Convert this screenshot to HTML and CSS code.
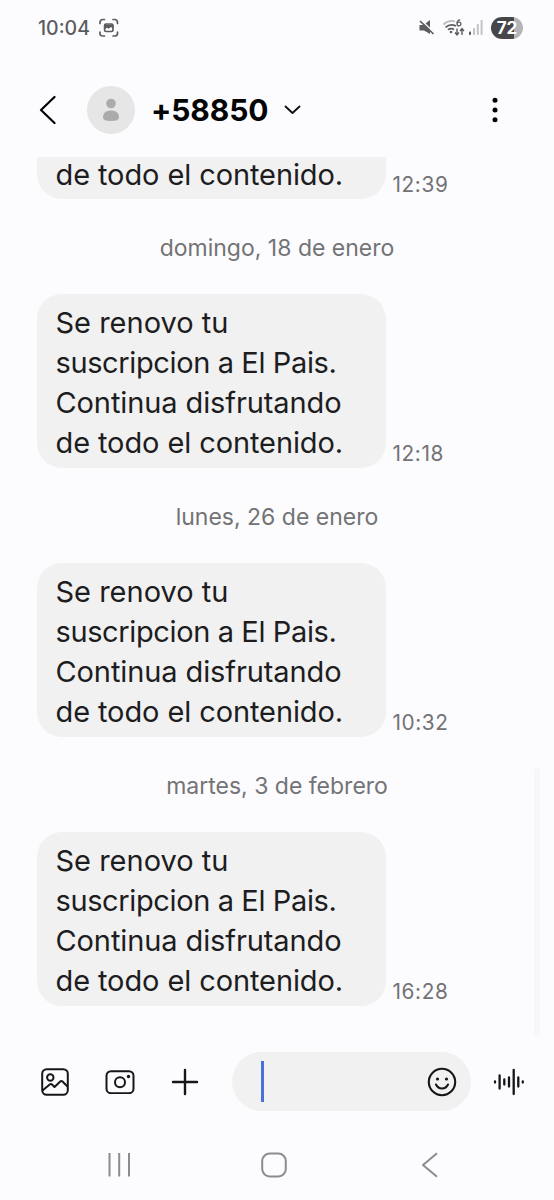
FILE: index.html
```html
<!DOCTYPE html>
<html lang="es">
<head>
<meta charset="utf-8">
<title>+58850</title>
<link rel="stylesheet" href="styles.css">
</head>
<body>
<div class="phone">
  <div class="status">
    <span class="clock">10:04</span>
    <svg class="shot" width="20" height="20" viewBox="0 0 20 20" fill="none" stroke="#5c5c5f" stroke-width="1.7" stroke-linecap="round"><path d="M1 5.500V4.500Q1 1.500 4 1.500H5.500M14 1.500h1.500Q18.500 1.500 18.500 4.500V5.500M18.500 14v1.500Q18.500 18 15.500 18H14M5.500 18H4Q1 18 1 15.500V14"/><rect x="5.600" y="6" width="8.400" height="7.500" rx="1.500"/><path d="M5.500 6.500h8.500v4l-2-1.500-2.500 1.800-1.500-1-2.500 1.500z" fill="#5c5c5f" stroke="none"/></svg>
    <div class="indicators">
      <svg width="16" height="16" viewBox="0 0 16 16"><path d="M.5 5h4L11 0v14L5 10.500H.500z" fill="#5c5c5f"/><path d="M1.500-.5 16 13.500" stroke="#fcfcfe" stroke-width="1.500"/><path d="M1 1l13.500 13" stroke="#5c5c5f" stroke-width="1.700"/></svg>
      <svg class="wifi" width="22" height="18" viewBox="0 0 22 18" fill="none" stroke="#5c5c5f" stroke-width="1.700"><path d="M.5 5.500Q6 .5 12 2.500" stroke="#bbb"/><path d="M2.500 8.300Q7.500 4 13 7M5 10.800Q8 8.700 11 10.500"/><circle cx="8" cy="13" r="1.300" fill="#5c5c5f" stroke="none"/><path d="M14 9.500v6.500M12 13.500l2 2.500 2-2.500M19 16V9.500M17 12l2-2.500 2 2.500" stroke-width="1.400"/><path d="M17.300.8Q14 1 14 4.500" stroke-width="1.300"/><circle cx="16" cy="5" r="1.900" stroke-width="1.300"/></svg>
      <svg class="signal" width="14" height="16" viewBox="0 0 14 16" fill="#c3c3c5"><rect y="11.500" width="2" height="3.500" rx=".7" fill="#5c5c5f"/><rect x="4" y="8" width="2" height="7" rx=".7"/><rect x="7.800" y="4" width="2" height="11" rx=".7"/><rect x="11.600" y="0" width="2" height="15" rx=".7"/></svg>
      <span class="battery">72</span>
    </div>
  </div>
  <header class="header">
    <svg class="back" width="17" height="30" viewBox="0 0 17 30" fill="none" stroke="#000" stroke-width="2.200" stroke-linecap="round" stroke-linejoin="round"><path d="M15.500 2 2 15 15.500 28"/></svg>
    <svg class="avatar" width="48" height="48" viewBox="0 0 48 48"><circle cx="24" cy="24" r="24" fill="#e6e6e6"/><g fill="#ababab"><circle cx="24" cy="17.500" r="4.800"/><path d="M16 31.500C16 27 19 24.500 24 24.500S32 27 32 31.500Q32 35 24 35T16 31.500z"/></g></svg>
    <h1 class="name">+58850</h1>
    <svg class="chevron" width="17" height="10" viewBox="0 0 17 10" fill="none" stroke="#111" stroke-width="1.900" stroke-linecap="round" stroke-linejoin="round"><path d="M1.500 1.500 8.500 8l7-6.500"/></svg>
    <svg class="more" width="6" height="26" viewBox="0 0 6 26"><circle cx="3" cy="3.300" r="2.500"/><circle cx="3" cy="13" r="2.500"/><circle cx="3" cy="22.700" r="2.500"/></svg>
  </header>
  <main class="thread">
    <div class="message partial"><p class="bubble"><span>de todo el contenido.</span></p><time>12:39</time></div>
    <div class="date">domingo, 18 de enero</div>
    <div class="message"><p class="bubble"><span class="first">Se renovo tu</span><span class="tight">suscripcion a El Pais.</span><span>Continua disfrutando</span><span>de todo el contenido.</span></p><time>12:18</time></div>
    <div class="date">lunes, 26 de enero</div>
    <div class="message"><p class="bubble"><span class="first">Se renovo tu</span><span class="tight">suscripcion a El Pais.</span><span>Continua disfrutando</span><span>de todo el contenido.</span></p><time>10:32</time></div>
    <div class="date">martes, 3 de febrero</div>
    <div class="message"><p class="bubble"><span class="first">Se renovo tu</span><span class="tight">suscripcion a El Pais.</span><span>Continua disfrutando</span><span>de todo el contenido.</span></p><time>16:28</time></div>
    <div class="scrollbar"></div>
  </main>
  <div class="composer">
    <svg class="gallery" width="28" height="28" viewBox="0 0 28 28" fill="none" stroke="#161618" stroke-width="2" stroke-linejoin="round"><rect x="1.200" y="1.200" width="25.600" height="25.600" rx="4.500"/><circle cx="9.300" cy="9.500" r="3.200"/><path d="M1.500 22.500 9 16.200Q10 15.500 11 16.500L13.500 19 19.500 13.300Q20.500 12.500 21.500 13.500L26.500 18.500"/></svg>
    <svg class="camera" width="30" height="24" viewBox="0 0 30 24" fill="none" stroke="#161618" stroke-width="2"><rect x="1.500" y="1.200" width="27" height="22" rx="4.500"/><circle cx="15" cy="12.200" r="5"/><circle cx="23.500" cy="6.500" r="1.700" fill="#161618" stroke="none"/></svg>
    <svg class="plus" width="28" height="28" viewBox="0 0 28 28" stroke="#161618" stroke-width="2.400" stroke-linecap="round"><path d="M14 2v24M2 14h24"/></svg>
    <div class="field"><i class="caret"></i>
      <svg width="30" height="30" viewBox="0 0 30 30" fill="none" stroke="#161618" stroke-width="2.100" stroke-linecap="round"><circle cx="15" cy="15" r="13.200"/><path d="M9 17.500Q11 21.500 15 21.500T21 17.500"/><g fill="#161618" stroke="none"><circle cx="10.500" cy="12" r="1.600"/><circle cx="19.500" cy="12" r="1.600"/></g></svg>
    </div>
    <svg class="voice" width="32" height="28" viewBox="0 0 32 28" stroke="#161618" stroke-width="2.300" stroke-linecap="round"><path d="M2 13.500v1M6.600 7.500v13M11.300 11.500v5M16 9.500v9M20.700 2v24M25.300 9.500v9M29.800 13.500v1"/></svg>
  </div>
  <nav class="nav">
    <svg width="24" height="24" viewBox="0 0 24 24" stroke="#8c8c8e" stroke-width="2"><path d="M2.500 0v23.500M12.200 0v23.500M22 0v23.500"/></svg>
    <svg class="home" width="26" height="26" viewBox="0 0 26 26" fill="none" stroke="#8c8c8e" stroke-width="2"><rect x="1.200" y="1.500" width="23.600" height="23" rx="7.500"/></svg>
    <svg class="return" width="18" height="26" viewBox="0 0 18 26" fill="none" stroke="#8c8c8e" stroke-width="2" stroke-linejoin="round"><path d="M16 1.200 2 13l14 11.800"/></svg>
  </nav>
</div>
</body>
</html>
```
FILE: styles.css
```css
* { box-sizing: border-box; }
body { margin: 0; background: #fcfcfe; font-family: Inter, Roboto, sans-serif; }
svg { display: block; flex: none; }
.phone { width: 554px; height: 1200px; display: flex; flex-direction: column; }
.phone > * { flex: none; }
.status { height: 57px; display: flex; align-items: center; padding: 0 31px 1px 38px; color: #5c5c5f; }
.clock { width: 61px; font-size: 19.5px; font-weight: 500; line-height: 28px; white-space: nowrap; }
.indicators { display: flex; align-items: center; margin-left: auto; }
.wifi { margin-left: 8px; }
.signal { margin-left: 4px; }
.battery { width: 32px; height: 22px; margin-left: 8px; border-radius: 11px; background: linear-gradient(90deg, #474749 72%, #b5b5b7 72%); color: #fff; font-size: 17px; line-height: 22px; font-weight: 700; text-align: center; }
.header { height: 100px; display: flex; align-items: center; padding: 5px 56px 0 39px; }
.avatar { margin-left: 31px; }
.name { width: 118px; margin: 0 0 0 16px; font-size: 30px; line-height: 40px; font-weight: 700; letter-spacing: -0.1px; white-space: nowrap; color: #050505; }
.chevron { margin-left: 15px; }
.more { margin-left: auto; }
.thread { position: relative; height: 880px; padding: 0 0 31px 37px; }
.message { display: flex; align-items: flex-end; height: 174px; }
.bubble { width: 349px; height: 174px; margin: 0; padding: 8.5px 18.5px 5.5px; border-radius: 25px; background: #f1f1f1; color: #1d1d1f; font-size: 29px; line-height: 40px; letter-spacing: -0.1px; white-space: nowrap; }
.bubble span { display: block; }
.bubble .first { letter-spacing: 0; }
.bubble .tight { letter-spacing: -0.38px; }
.partial { height: 42px; }
.partial .bubble { height: 42px; padding-top: 0; border-radius: 0 0 25px 25px; line-height: 35px; }
.message time { margin: 0 0 2px 6.5px; font-size: 20.8px; line-height: 24px; letter-spacing: 0.6px; color: #737375; }
.date { height: 95px; margin-right: 37px; font-size: 23px; line-height: 99px; text-align: center; color: #737375; }
.scrollbar { position: absolute; right: 14px; top: 611px; width: 6px; height: 268px; border-radius: 3px; background: #f7f7f9; }
.composer { height: 88px; display: flex; align-items: center; padding: 1px 29px 0 41px; }
.camera { margin-left: 36px; }
.plus { margin-left: 36px; }
.field { display: flex; align-items: center; justify-content: space-between; width: 239px; height: 59px; margin-left: 33px; padding: 0 14px 0 29px; border-radius: 30px; background: #f1f1f1; }
.caret { width: 3px; height: 41px; background: #4a70dc; }
.voice { margin-left: 22px; }
.nav { height: 75px; display: flex; align-items: center; padding: 4px 0 0 107px; }
.home { margin-left: 130px; }
.return { margin-left: 134px; }
```
